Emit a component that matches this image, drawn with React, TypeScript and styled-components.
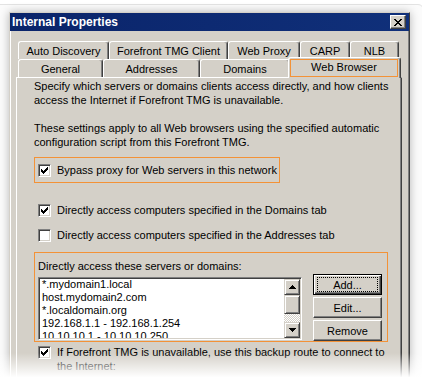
import React from "react";
import styled, { createGlobalStyle } from "styled-components";

const GlobalStyle = createGlobalStyle`
  html, body { margin: 0; padding: 0; background: #fff; }
  body {
    font-family: "Liberation Sans", Arial, sans-serif;
    font-size: 11px;
    color: #000;
  }
`;

const FACE = "#d4d0c8";
const SHADOW = "#808080";
const DARK = "#404040";
const HILITE = "#f39237";

const Stage = styled.div`
  position: relative;
  width: 422px;
  height: 377px;
  overflow: hidden;
  background: #fff;
`;

// faint window lying behind the dialog
const BackWindow = styled.div`
  position: absolute;
  left: -40px;
  top: 4px;
  width: 464px;
  height: 400px;
  box-sizing: border-box;
  background: #fbfbfb;
  border: 1px solid #e3e3e3;
  border-radius: 6px;
`;

const Dialog = styled.div`
  position: absolute;
  left: 9px;
  top: 12px;
  width: 401px;
  height: 400px;
  box-sizing: border-box;
  background: ${FACE};
  border: 1px solid ${DARK};
  border-top-color: ${FACE};
  border-left-color: ${FACE};
  box-shadow: inset 1px 1px 0 #fff, inset -1px -1px 0 ${SHADOW}, 0 0 9px rgba(0, 0, 0, 0.28);
`;

const TitleBar = styled.div`
  height: 18px;
  display: flex;
  align-items: center;
  justify-content: space-between;
  padding: 0 3px 0 2px;
  background: linear-gradient(90deg, #0a246a, #10307a);
  color: #fff;
`;

const Title = styled.span`
  font-weight: bold;
  font-size: 12px;
`;

const CloseButton = styled.div`
  width: 16px;
  height: 14px;
  box-sizing: border-box;
  background: ${FACE};
  border: 1px solid;
  border-color: #fff ${DARK} ${DARK} #fff;
  box-shadow: inset -1px -1px 0 ${SHADOW};
  display: flex;
  align-items: center;
  justify-content: center;
`;

const Body = styled.div`
  padding: 10px 7px 0 6px;
`;

const TabRow = styled.div`
  display: flex;
  align-items: flex-start;
  height: 18px;
  padding-left: 2px;
`;

const Tab = styled.div<{ $w: number; $active?: boolean }>`
  position: relative;
  width: ${(p) => p.$w + (p.$active ? 4 : 0)}px;
  height: ${(p) => (p.$active ? 21 : 18)}px;
  margin: ${(p) => (p.$active ? "-2px -2px 0" : "0")};
  z-index: ${(p) => (p.$active ? 2 : 1)};
  box-sizing: border-box;
  background: ${FACE};
  border: 1px solid #fff;
  border-bottom: none;
  border-right-color: ${DARK};
  border-radius: 3px 3px 0 0;
  box-shadow: inset -1px 0 0 ${SHADOW};
  display: flex;
  align-items: stretch;
  padding: ${(p) => (p.$active ? "1px 2px 1px 1px" : "0")};
  white-space: nowrap;
`;

const TabLabel = styled.span<{ $active?: boolean }>`
  flex: 1;
  display: flex;
  align-items: center;
  justify-content: center;
  box-sizing: border-box;
  border: 1px solid ${(p) => (p.$active ? HILITE : "transparent")};
  padding-bottom: ${(p) => (p.$active ? 3 : 0)}px;
`;

const Panel = styled.div`
  position: relative;
  height: 330px;
  box-sizing: border-box;
  border: 1px solid ${DARK};
  border-top-color: #fff;
  border-left-color: #fff;
  box-shadow: inset -1px -1px 0 ${SHADOW};
  padding: 1px 13px 0 17px;
  line-height: 14px;
  display: flex;
  flex-direction: column;
  align-items: flex-start;
`;

const Para = styled.p<{ $mt?: number }>`
  margin: ${(p) => p.$mt ?? 0}px 0 0;
  white-space: nowrap;
`;

const Highlight = styled.div<{ $mt: number; $w: number; $h: number }>`
  margin-top: ${(p) => p.$mt}px;
  width: ${(p) => p.$w}px;
  height: ${(p) => p.$h}px;
  box-sizing: border-box;
  border: 1px solid ${HILITE};
  padding-left: 3px;
  display: flex;
  align-items: center;
`;

const CheckRow = styled.div<{ $mt?: number; $indent?: number }>`
  margin-top: ${(p) => p.$mt ?? 0}px;
  padding-left: ${(p) => p.$indent ?? 0}px;
  min-height: 20px;
  display: flex;
  align-items: center;
  gap: 6px;
  white-space: nowrap;
`;

const TopCheckRow = styled(CheckRow)`
  align-items: flex-start;
  min-height: 0;
`;

const Box = styled.span<{ $top?: number }>`
  flex: none;
  width: 13px;
  height: 13px;
  margin-top: ${(p) => p.$top ?? 0}px;
  box-sizing: border-box;
  background: #fff;
  border: 1px solid;
  border-color: ${SHADOW} #fff #fff ${SHADOW};
  box-shadow: inset 1px 1px 0 ${DARK}, inset -1px -1px 0 ${FACE};
  display: flex;
  align-items: center;
  justify-content: center;
`;

const Group = styled.div`
  margin-top: 7px;
  align-self: stretch;
  height: 90px;
  box-sizing: border-box;
  border: 1px solid ${HILITE};
  padding: 6px 4px 0 3px;
  display: flex;
  gap: 11px;
`;

const ListColumn = styled.div`
  display: flex;
  flex-direction: column;
`;

const ListBox = styled.div`
  width: 264px;
  height: 63px;
  margin-top: 4px;
  box-sizing: border-box;
  background: #fff;
  border: 1px solid;
  border-color: ${SHADOW} #fff #fff ${SHADOW};
  box-shadow: inset 1px 1px 0 ${DARK}, inset -1px -1px 0 ${FACE};
  padding: 1px;
  display: flex;
`;

const Items = styled.div`
  flex: 1;
  overflow: hidden;
  padding: 0 0 0 2px;
  margin-top: -1px;
  line-height: 13px;
  white-space: nowrap;
`;

const ScrollBar = styled.div`
  width: 16px;
  display: flex;
  flex-direction: column;
`;

const ScrollPart = styled.div<{ $h: number }>`
  height: ${(p) => p.$h}px;
  flex: none;
  box-sizing: border-box;
  background: ${FACE};
  border: 1px solid;
  border-color: ${FACE} ${DARK} ${DARK} ${FACE};
  box-shadow: inset 1px 1px 0 #fff, inset -1px -1px 0 ${SHADOW};
  display: flex;
  align-items: center;
  justify-content: center;
`;

const Track = styled.div`
  flex: 1;
  background-color: #fff;
  background-image: repeating-conic-gradient(${FACE} 0 25%, #fff 0 50%);
  background-size: 2px 2px;
`;

const ButtonColumn = styled.div`
  margin-top: 15px;
  display: flex;
  flex-direction: column;
  gap: 2px;
`;

const Button = styled.button<{ $default?: boolean }>`
  width: 69px;
  height: 21px;
  box-sizing: border-box;
  padding: 0;
  font: 11px "Liberation Sans", Arial, sans-serif;
  color: #000;
  background: ${FACE};
  border: 1px solid;
  border-color: ${(p) => (p.$default ? "#000" : `#fff ${DARK} ${DARK} #fff`)};
  box-shadow: ${(p) =>
    p.$default
      ? `inset 1px 1px 0 #fff, inset -1px -1px 0 ${DARK}, inset -2px -2px 0 ${SHADOW}`
      : `inset -1px -1px 0 ${SHADOW}`};
  display: flex;
  align-items: stretch;
`;

const ButtonLabel = styled.span<{ $focus?: boolean }>`
  flex: 1;
  margin: 2px 3px;
  border: 1px dotted ${(p) => (p.$focus ? "#000" : "transparent")};
  display: flex;
  align-items: center;
  justify-content: center;
`;

const Fade = styled.div`
  position: absolute;
  left: 0;
  right: 0;
  bottom: 0;
  height: 24px;
  background: linear-gradient(to bottom, rgba(255, 255, 255, 0), rgba(255, 255, 255, 0.98));
  pointer-events: none;
`;

const Check = () => (
  <svg width="7" height="7" viewBox="0 0 7 7" shapeRendering="crispEdges">
    <path
      fill="#000"
      d="M6 0h1v3h-1v1h-1v1h-1v1h-1v1h-1v-1h-1v-1h-1v-3h1v1h1v1h1v-1h1v-1h1z"
    />
  </svg>
);

const Arrow = ({ up }: { up?: boolean }) => (
  <svg width="7" height="4" viewBox="0 0 7 4" shapeRendering="crispEdges">
    <path fill="#000" d={up ? "M3 0h1v1h1v1h1v1h1v1h-7v-1h1v-1h1v-1h1z" : "M0 0h7v1h-1v1h-1v1h-1v1h-1v-1h-1v-1h-1v-1h-1z"} />
  </svg>
);

const CloseX = () => (
  <svg width="8" height="7" viewBox="0 0 8 7" shapeRendering="crispEdges">
    <path
      fill="#000"
      d="M0 0h2v1h1v1h2v-1h1v-1h2v1h-1v1h-1v1h-1v1h1v1h1v1h1v1h-2v-1h-1v-1h-2v1h-1v1h-2v-1h1v-1h1v-1h1v-1h-1v-1h-1v-1h-1z"
    />
  </svg>
);

const backTabs = [
  { label: "Auto Discovery", w: 91 },
  { label: "Forefront TMG Client", w: 119 },
  { label: "Web Proxy", w: 72 },
  { label: "CARP", w: 50 },
  { label: "NLB", w: 49 },
];

const frontTabs = [
  { label: "General", w: 85 },
  { label: "Addresses", w: 97 },
  { label: "Domains", w: 90 },
  { label: "Web Browser", w: 109, active: true },
];

const entries = [
  "*.mydomain1.local",
  "host.mydomain2.com",
  "*.localdomain.org",
  "192.168.1.1 - 192.168.1.254",
  "10.10.10.1 - 10.10.10.250",
];

export default function App() {
  return (
    <Stage>
      <GlobalStyle />
      <BackWindow />
      <Dialog>
        <TitleBar>
          <Title>Internal Properties</Title>
          <CloseButton>
            <CloseX />
          </CloseButton>
        </TitleBar>
        <Body>
          <TabRow>
            {backTabs.map((t) => (
              <Tab key={t.label} $w={t.w}>
                <TabLabel>{t.label}</TabLabel>
              </Tab>
            ))}
          </TabRow>
          <TabRow>
            {frontTabs.map((t) => (
              <Tab key={t.label} $w={t.w} $active={t.active}>
                <TabLabel $active={t.active}>{t.label}</TabLabel>
              </Tab>
            ))}
          </TabRow>
          <Panel>
            <Para>
              Specify which servers or domains clients access directly, and how clients
              <br />
              access the Internet if Forefront TMG is unavailable.
            </Para>
            <Para $mt={14}>
              These settings apply to all Web browsers using the specified automatic
              <br />
              configuration script from this Forefront TMG.
            </Para>
            <Highlight $mt={8} $w={246} $h={26}>
              <CheckRow>
                <Box>
                  <Check />
                </Box>
                Bypass proxy for Web servers in this network
              </CheckRow>
            </Highlight>
            <CheckRow $mt={17} $indent={4}>
              <Box>
                <Check />
              </Box>
              Directly access computers specified in the Domains tab
            </CheckRow>
            <CheckRow $mt={5} $indent={4}>
              <Box />
              Directly access computers specified in the Addresses tab
            </CheckRow>
            <Group>
              <ListColumn>
                <span>Directly access these servers or domains:</span>
                <ListBox>
                  <Items>
                    {entries.map((e) => (
                      <div key={e}>{e}</div>
                    ))}
                  </Items>
                  <ScrollBar>
                    <ScrollPart $h={16}>
                      <Arrow up />
                    </ScrollPart>
                    <ScrollPart $h={19} />
                    <Track />
                    <ScrollPart $h={16}>
                      <Arrow />
                    </ScrollPart>
                  </ScrollBar>
                </ListBox>
              </ListColumn>
              <ButtonColumn>
                <Button $default>
                  <ButtonLabel $focus>Add...</ButtonLabel>
                </Button>
                <Button>
                  <ButtonLabel>Edit...</ButtonLabel>
                </Button>
                <Button>
                  <ButtonLabel>Remove</ButtonLabel>
                </Button>
              </ButtonColumn>
            </Group>
            <TopCheckRow $mt={3} $indent={4}>
              <Box $top={1}>
                <Check />
              </Box>
              <span>
                If Forefront TMG is unavailable, use this backup route to connect to
                <br />
                the Internet:
              </span>
            </TopCheckRow>
          </Panel>
        </Body>
      </Dialog>
      <Fade />
    </Stage>
  );
}
